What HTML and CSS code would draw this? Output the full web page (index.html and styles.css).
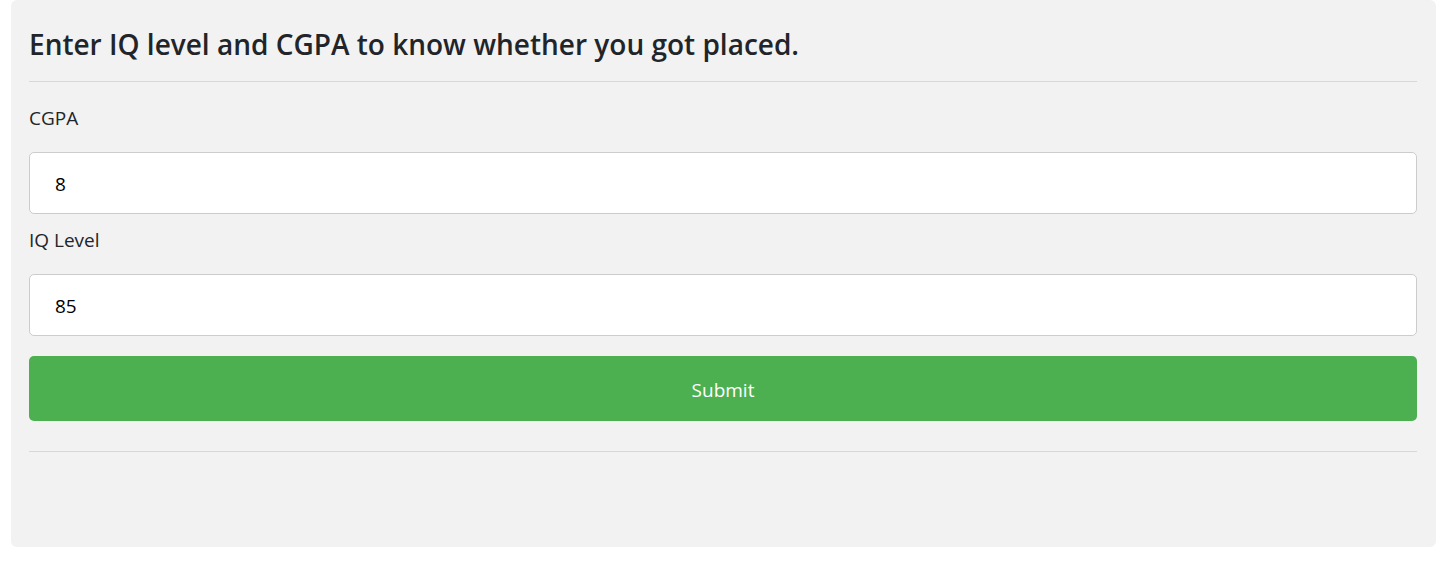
FILE: index.html
```html
<!DOCTYPE html>
<html lang="en">
<head>
  <meta charset="utf-8">
  <meta name="viewport" content="width=device-width, initial-scale=1">
  <title>Placement Predictor</title>
  <link rel="stylesheet" href="styles.css">
</head>
<body>
  <main class="card">
    <h1 class="title">Enter IQ level and CGPA to know whether you got placed.</h1>
    <hr class="divider">
    <form class="form">
      <label class="label" for="cgpa">CGPA</label>
      <input class="field" type="text" id="cgpa" name="cgpa" value="8">
      <label class="label" for="iq">IQ Level</label>
      <input class="field" type="text" id="iq" name="iq" value="85">
      <button class="submit" type="submit">Submit</button>
    </form>
    <hr class="divider">
  </main>
</body>
</html>
```

FILE: styles.css
```css
* {
  box-sizing: border-box;
}

body {
  margin: 0;
  padding: 0 5px 20px 11px;
  background: #fff;
  color: #212529;
  font-family: "Segoe UI", "Open Sans", "Noto Sans", sans-serif;
  font-size: 19px;
  line-height: 32px;
}

.card {
  padding: 26px 19px 75px 18px;
  border-radius: 6px;
  background: #f2f2f2;
}

.title {
  margin: 0;
  font-size: 28px;
  font-weight: 600;
  line-height: 36px;
}

.divider {
  height: 1px;
  margin: 19px 0 20px;
  border: 0;
  background: #d8d8d8;
}

.form {
  display: flex;
  flex-direction: column;
  margin-bottom: 30px;
}

.label {
  margin-bottom: 18px;
}

.field {
  width: 100%;
  height: 62px;
  margin-bottom: 10px;
  padding: 2px 25px 0;
  border: 1px solid #ccc;
  border-radius: 5px;
  background: #fff;
  color: #000;
  font: inherit;
}

.submit {
  height: 65px;
  margin-top: 10px;
  padding: 2px 25px 0;
  border: 0;
  border-radius: 5px;
  background: #4caf50;
  color: #fff;
  font: inherit;
  cursor: pointer;
}
```
